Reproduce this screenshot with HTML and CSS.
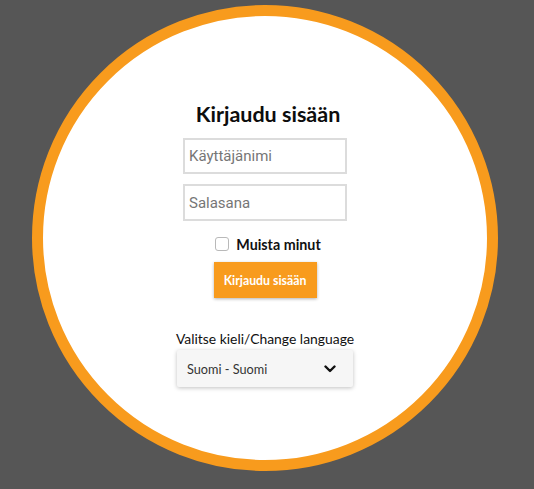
FILE: index.html
```html
<!DOCTYPE html>
<html lang="fi">
<head>
<meta charset="utf-8">
<title>Kirjaudu sisään</title>
<link rel="stylesheet" href="styles.css">
</head>
<body>
<div class="stage">
  <div class="circle">
    <form class="login">
      <h1 class="title">Kirjaudu sisään</h1>
      <input class="field" type="text" placeholder="Käyttäjänimi">
      <input class="field field-second" type="password" placeholder="Salasana">
      <label class="remember"><input class="check" type="checkbox"><span>Muista minut</span></label>
      <button class="submit" type="button">Kirjaudu sisään</button>
      <div class="lang-label">Valitse kieli/Change language</div>
      <button class="lang-select" type="button">
        <span>Suomi - Suomi</span>
        <svg class="chevron" width="12" height="8" viewBox="0 0 12 8"><path d="M1.5 1.5 L6 6 L10.5 1.5" fill="none" stroke="#111" stroke-width="2.4" stroke-linecap="round" stroke-linejoin="round"/></svg>
      </button>
    </form>
  </div>
</div>
</body>
</html>
```

FILE: styles.css
```css
html, body {
  margin: 0;
  padding: 0;
  background: #565656;
  height: 100%;
  overflow: hidden;
}

.stage {
  padding: 5px 0 0 32px;
}

.circle {
  box-sizing: border-box;
  width: 466px;
  height: 466px;
  border-radius: 50%;
  border: 11px solid #f89b1d;
  background: #ffffff;
  padding-top: 85px;
}

.login {
  display: flex;
  flex-direction: column;
  align-items: center;
  margin: 0;
  font-family: Lato, "Open Sans", sans-serif;
  color: #111;
}

.title {
  margin: 0;
  font-size: 21.5px;
  line-height: 26px;
  font-weight: 700;
  color: #0d0d0d;
  position: relative;
  left: 3px;
}

.field {
  box-sizing: border-box;
  width: 164px;
  height: 36px;
  margin: 11px 0 0 0;
  padding: 0 0 0 4px;
  border: 2px solid #dcdcdc;
  border-radius: 0;
  background: #fff;
  font-family: Roboto, "Liberation Sans", sans-serif;
  font-size: 15px;
  color: #333;
  outline: none;
}

.field::placeholder {
  color: #767676;
  opacity: 1;
}

.field-second {
  margin-top: 10px;
  height: 37px;
}

.remember {
  display: flex;
  align-items: center;
  gap: 7px;
  margin-top: 13px;
  height: 20px;
  font-size: 14.3px;
  font-weight: 700;
  color: #111;
  position: relative;
  left: 3px;
}

.check {
  appearance: none;
  -webkit-appearance: none;
  box-sizing: border-box;
  width: 14px;
  height: 14px;
  margin: 0;
  border: 1px solid #b9b9b9;
  border-radius: 3px;
  background: #fff;
}

.submit {
  margin-top: 8px;
  width: 103px;
  height: 36px;
  border: none;
  border-radius: 0;
  background: #f89b1d;
  color: #fff;
  font-family: Lato, "Open Sans", sans-serif;
  font-size: 12.3px;
  font-weight: 700;
  box-shadow: 0 1px 3px rgba(0, 0, 0, 0.3);
  padding: 0;
}

.lang-label {
  margin-top: 32px;
  font-size: 13.9px;
  line-height: 18px;
  font-weight: 400;
  color: #111;
}

.lang-select {
  margin-top: 2px;
  box-sizing: border-box;
  width: 176px;
  height: 37px;
  display: flex;
  align-items: center;
  justify-content: space-between;
  padding: 0 17px 0 10px;
  border: none;
  border-radius: 2px;
  background: #f6f6f6;
  box-shadow: 0 1px 4px rgba(0, 0, 0, 0.25);
  font-family: Lato, "Open Sans", sans-serif;
  font-size: 12.7px;
  color: #333;
}

.chevron {
  display: block;
}
```
